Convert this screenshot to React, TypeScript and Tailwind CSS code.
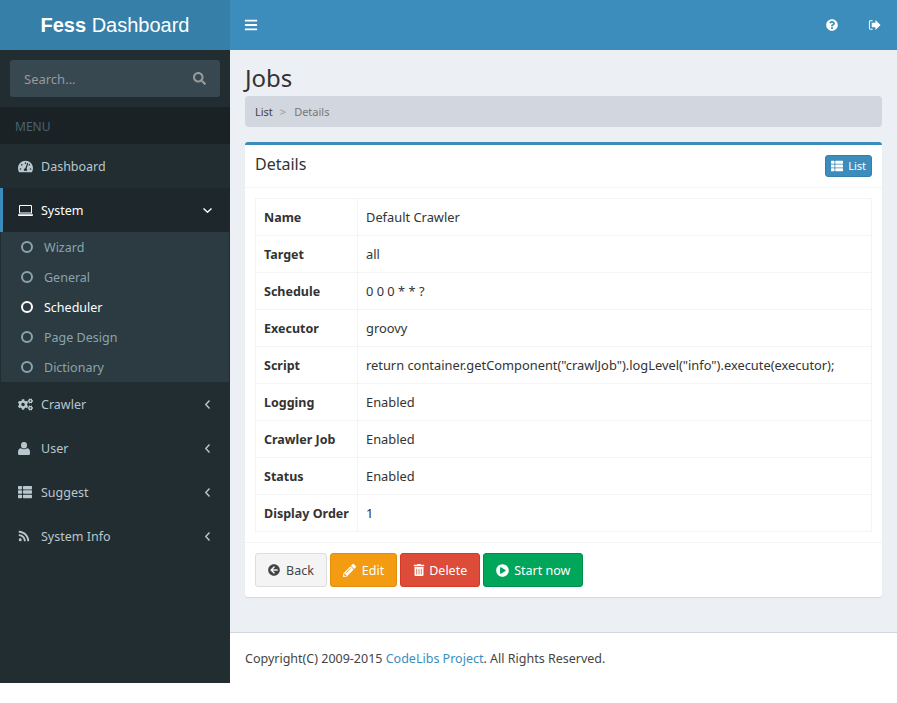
import { ReactNode } from "react";
import {
  FaArrowCircleLeft,
  FaBars,
  FaCogs,
  FaPencilAlt,
  FaPlayCircle,
  FaQuestionCircle,
  FaRss,
  FaSearch,
  FaTachometerAlt,
  FaThList,
  FaTrashAlt,
} from "react-icons/fa";

const rows = [
  ["Name", "Default Crawler"],
  ["Target", "all"],
  ["Schedule", "0 0 0 * * ?"],
  ["Executor", "groovy"],
  ["Script", 'return container.getComponent("crawlJob").logLevel("info").execute(executor);'],
  ["Logging", "Enabled"],
  ["Crawler Job", "Enabled"],
  ["Status", "Enabled"],
  ["Display Order", "1"],
];

const subItems = ["Wizard", "General", "Scheduler", "Page Design", "Dictionary"];

function SignOutIcon() {
  return (
    <svg width="13" height="12" viewBox="0 0 14 12" fill="currentColor">
      <path d="M5 1H2.500A1.500 1.500 0 0 0 1 2.500v7A1.500 1.500 0 0 0 2.500 11H5V10H2.500A.5.5 0 0 1 2 9.500v-7A.5.5 0 0 1 2.500 2H5z" />
      <path d="M8 .5 13.500 6 8 11.500V8.500H4v-5h4z" />
    </svg>
  );
}

function LaptopIcon() {
  return (
    <svg width="15" height="11" viewBox="0 0 15 11" fill="currentColor">
      <path d="M2 0h11a1 1 0 0 1 1 1v7.500H1V1a1 1 0 0 1 1-1zm0 1v6.500h11V1z" fillRule="evenodd" />
      <path d="M0 9.200h15v.8a1 1 0 0 1-1 1H1a1 1 0 0 1-1-1z" />
    </svg>
  );
}

function UserIcon() {
  return (
    <svg width="12" height="13" viewBox="0 0 12 13" fill="currentColor">
      <ellipse cx="6" cy="3.200" rx="3" ry="3.200" />
      <path d="M3 6.200c.8.700 1.800 1 3 1s2.200-.3 3-1c2 .2 3 1.500 3 4V11.500A1.500 1.500 0 0 1 10.500 13h-9A1.500 1.500 0 0 1 0 11.500v-1.300c0-2.500 1-3.800 3-4z" />
    </svg>
  );
}

function AngleLeft() {
  return (
    <svg width="5" height="9" viewBox="0 0 5 9" fill="none" stroke="currentColor" strokeWidth="1.400">
      <path d="M4.500.5 .8 4.500 4.500 8.500" />
    </svg>
  );
}

function AngleDown() {
  return (
    <svg width="9" height="5" viewBox="0 0 9 5" fill="none" stroke="currentColor" strokeWidth="1.400">
      <path d="M.5.5 4.500 4.200 8.500.5" />
    </svg>
  );
}

function MenuItem({ icon, label, arrow = true }: { icon: ReactNode; label: string; arrow?: boolean }) {
  return (
    <div className="flex h-11 items-center pl-[18px] pr-5 text-[#b8c7ce]">
      <span className="flex w-[23px] justify-start">{icon}</span>
      <span className="flex-1 pt-[2px]">{label}</span>
      {arrow && <AngleLeft />}
    </div>
  );
}

export default function App() {
  return (
    <div className="flex h-[683px] w-[897px] font-['Noto_Sans',sans-serif] text-[12.5px] text-[#333]">
      <aside className="flex w-[230px] shrink-0 flex-col bg-[#222d32]">
        <div className="flex h-[50px] items-center justify-center bg-[#367fa9] font-['Liberation_Sans',sans-serif] text-xl text-white">
          <b>Fess</b>&nbsp;Dashboard
        </div>
        <div className="p-2.5">
          <div className="flex h-[37px] items-center justify-between rounded-[3px] bg-[#374850] pl-3.5 pr-3.5 text-[#999]">
            <span className="pt-[3px] text-[13px]">Search...</span>
            <FaSearch size={13} />
          </div>
        </div>
        <div className="flex h-[37px] items-center bg-[#1a2226] px-[15px] pt-[2px] text-xs text-[#4b646f]">MENU</div>
        <MenuItem icon={<FaTachometerAlt size={15} />} label="Dashboard" arrow={false} />
        <div className="flex h-11 items-center border-l-[3px] border-[#3c8dbc] bg-[#1e282c] pl-[15px] pr-[18px] text-white">
          <span className="flex w-[23px]"><LaptopIcon /></span>
          <span className="flex-1 pt-[2px]">System</span>
          <AngleDown />
        </div>
        <ul className="mx-px bg-[#2c3b41]">
          {subItems.map((item) => (
            <li
              key={item}
              className={`flex h-[30px] items-center pl-5 ${item === "Scheduler" ? "text-white" : "text-[#8aa4af]"}`}
            >
              <span className="mr-[11px] size-3 rounded-full border-2 border-current" />
              <span className="pt-[2px]">{item}</span>
            </li>
          ))}
        </ul>
        <MenuItem icon={<FaCogs size={15} />} label="Crawler" />
        <MenuItem icon={<UserIcon />} label="User" />
        <MenuItem icon={<FaThList size={14} />} label="Suggest" />
        <MenuItem icon={<FaRss size={12} />} label="System Info" />
      </aside>

      <div className="flex min-w-0 flex-1 flex-col">
        <header className="flex h-[50px] items-center justify-between bg-[#3c8dbc] pl-3.5 pr-4 text-white">
          <FaBars size={14} />
          <div className="flex items-center gap-[30px]">
            <FaQuestionCircle size={12} />
            <SignOutIcon />
          </div>
        </header>

        <main className="flex-1 bg-[#ecf0f5] px-[15px] pt-[14px]">
          <h1 className="text-2xl leading-[28px]">Jobs</h1>
          <div className="mt-1 flex h-[31px] items-center rounded-sm bg-[#d2d6de] px-2.5 pt-px text-[11px]">
            <span className="text-[#444]">List</span>
            <span className="ml-[7px] mr-[8px] text-[#999]">&gt;</span>
            <span className="text-[#777]">Details</span>
          </div>

          <section className="mt-[15px] rounded-[3px] border-t-[3px] border-[#3c8dbc] bg-white shadow-[0_1px_1px_rgba(0,0,0,0.1)]">
            <div className="flex h-[43px] items-center justify-between border-b border-[#f4f4f4] px-2.5">
              <h3 className="pb-[5px] text-base">Details</h3>
              <button className="flex h-[22px] items-center gap-[5px] rounded-[3px] border border-[#367fa9] bg-[#3c8dbc] px-[5px] text-[11px] text-white">
                <FaThList size={12} />
                List
              </button>
            </div>
            <div className="p-2.5">
              <table className="w-full border-collapse border border-[#f4f4f4] text-[12.850px]">
                <tbody>
                  {rows.map(([k, v]) => (
                    <tr key={k} className="h-[37px]">
                      <th className="w-[102px] whitespace-nowrap border border-[#f4f4f4] px-2 pt-[2px] text-left text-[12.500px] font-bold">{k}</th>
                      <td className="border border-[#f4f4f4] px-2 pt-px">{v}</td>
                    </tr>
                  ))}
                </tbody>
              </table>
            </div>
            <div className="flex gap-[3px] border-t border-[#f4f4f4] p-2.5">
              <button className="flex h-[34px] items-center gap-[6px] rounded-[3px] border border-[#ddd] bg-[#f4f4f4] px-3 text-[#444]">
                <FaArrowCircleLeft size={12} /> <span className="pt-[2px]">Back</span>
              </button>
              <button className="flex h-[34px] items-center gap-[6px] rounded-[3px] border border-[#e08e0b] bg-[#f39c12] px-3 text-white">
                <FaPencilAlt size={13} /> <span className="pt-[2px]">Edit</span>
              </button>
              <button className="flex h-[34px] items-center gap-1 rounded-[3px] border border-[#d73925] bg-[#dd4b39] px-3 text-white">
                <FaTrashAlt size={12} /> <span className="pt-[2px]">Delete</span>
              </button>
              <button className="flex h-[34px] items-center gap-[5px] rounded-[3px] border border-[#008d4c] bg-[#00a65a] px-3 text-white">
                <FaPlayCircle size={13} /> <span className="pt-[2px]">Start now</span>
              </button>
            </div>
          </section>
        </main>

        <footer className="flex h-[51px] items-center border-t border-[#d2d6de] bg-white px-[15px] pt-[2px] text-[#444]">
          <span>
            Copyright(C) 2009-2015 <a className="text-[#3c8dbc]">CodeLibs Project</a>. All Rights Reserved.
          </span>
        </footer>
      </div>
    </div>
  );
}
